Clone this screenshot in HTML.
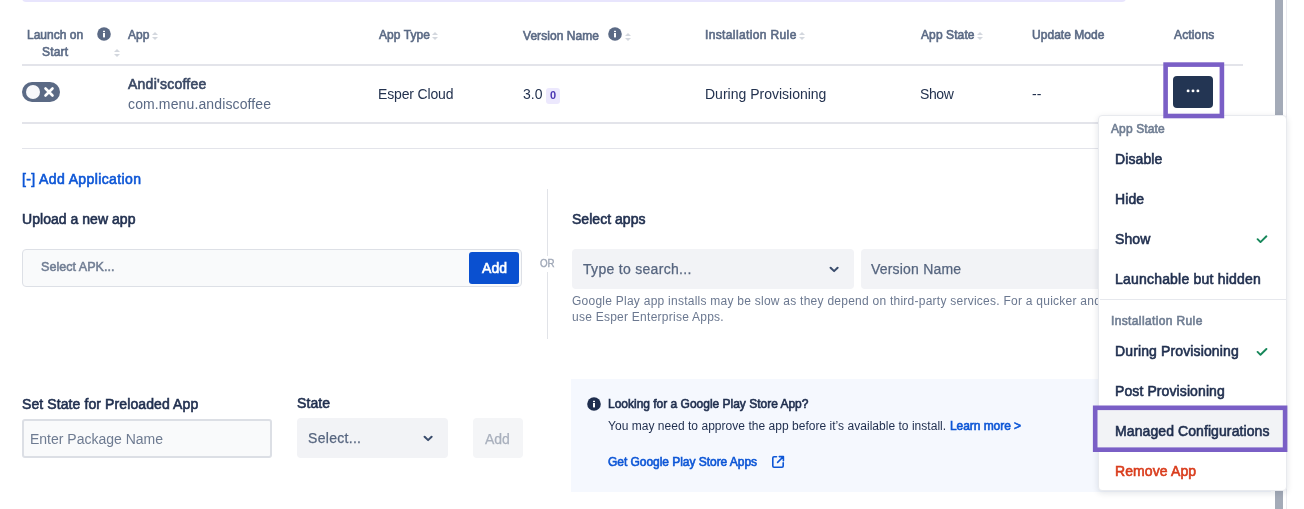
<!DOCTYPE html>
<html><head><meta charset="utf-8">
<style>
html,body{margin:0;padding:0;width:1304px;height:509px;overflow:hidden;background:#fff;position:relative;font-family:"Liberation Sans",sans-serif;}
.a{position:absolute;}
.t{position:absolute;white-space:nowrap;}
.sb{-webkit-text-stroke:0.6px currentColor;}
.s12{-webkit-text-stroke:0.6px currentColor;}
.sort{position:absolute;width:6px;height:8px;}
.sort:before,.sort:after{content:"";position:absolute;left:0;border-left:3px solid transparent;border-right:3px solid transparent;}
.sort:before{top:0;border-bottom:3px solid #d3d7de;}
.sort:after{top:5px;border-top:3px solid #d3d7de;}
</style></head><body><div class="a" style="left:0;top:0;width:1304px;height:509px;overflow:hidden;will-change:transform;">
<div class="a" style="left:22px;top:-6px;width:1104px;height:8px;background:#e8e5fd;border-radius:4px;"></div>
<div class="a" style="left:1275px;top:0px;width:8px;height:509px;background:#a4abb8;"></div>
<div class="a" style="left:1286px;top:0px;width:1px;height:509px;background:#ececf1;"></div>
<div class="t s12" style="left:27px;top:29px;font-size:12px;line-height:12px;color:#5b6a85;">Launch on</div>
<div class="t s12" style="left:42px;top:46px;font-size:12px;line-height:12px;color:#5b6a85;letter-spacing:0.2px;">Start</div>
<svg class="a" style="left:97px;top:27px;" width="14" height="14" viewBox="0 0 14 14"><circle cx="7" cy="7" r="6.8" fill="#5b6a85"/><rect x="6" y="3.8" width="2" height="1.3" fill="#fff"/><rect x="6" y="6" width="2" height="4.4" fill="#fff"/></svg>
<div class="sort" style="left:114px;top:49px;"></div>
<div class="t s12" style="left:128px;top:29px;font-size:12px;line-height:12px;color:#5b6a85;letter-spacing:0.05px;">App</div>
<div class="sort" style="left:152px;top:32px;"></div>
<div class="t s12" style="left:379px;top:29px;font-size:12px;line-height:12px;color:#5b6a85;letter-spacing:0.05px;">App Type</div>
<div class="sort" style="left:432px;top:32px;"></div>
<div class="t s12" style="left:523px;top:30px;font-size:12px;line-height:12px;color:#5b6a85;letter-spacing:0.05px;">Version Name</div>
<svg class="a" style="left:608px;top:27px;" width="14" height="14" viewBox="0 0 14 14"><circle cx="7" cy="7" r="6.8" fill="#5b6a85"/><rect x="6" y="3.8" width="2" height="1.3" fill="#fff"/><rect x="6" y="6" width="2" height="4.4" fill="#fff"/></svg>
<div class="sort" style="left:625px;top:33px;"></div>
<div class="t s12" style="left:705px;top:29px;font-size:12px;line-height:12px;color:#5b6a85;letter-spacing:0.37px;">Installation Rule</div>
<div class="sort" style="left:799px;top:32px;"></div>
<div class="t s12" style="left:921px;top:29px;font-size:12px;line-height:12px;color:#5b6a85;letter-spacing:0.1px;">App State</div>
<div class="sort" style="left:977px;top:32px;"></div>
<div class="t s12" style="left:1032px;top:29px;font-size:12px;line-height:12px;color:#5b6a85;letter-spacing:0.04px;">Update Mode</div>
<div class="t s12" style="left:1174px;top:29px;font-size:12px;line-height:12px;color:#5b6a85;letter-spacing:0.15px;">Actions</div>
<div class="a" style="left:22px;top:64px;width:1221px;height:2px;background:#e3e4ea;"></div>
<div class="a" style="left:22px;top:82px;width:38px;height:20px;border-radius:10px;background:#5b6a85;"></div>
<div class="a" style="left:26px;top:85px;width:14px;height:14px;border-radius:50%;background:#f7f8fb;"></div>
<svg class="a" style="left:43px;top:86px;" width="12" height="12" viewBox="0 0 12 12"><path d="M2.5 2.5 L9.5 9.5 M9.5 2.5 L2.5 9.5" stroke="#fff" stroke-width="2.6" stroke-linecap="round"/></svg>
<div class="t sb" style="left:128px;top:77px;font-size:14px;line-height:14px;color:#3a4864;letter-spacing:0.25px;">Andi'scoffee</div>
<div class="t" style="left:128px;top:97px;font-size:14px;line-height:14px;color:#5b6a85;letter-spacing:0.13px;">com.menu.andiscoffee</div>
<div class="t" style="left:378px;top:87px;font-size:14px;line-height:14px;color:#23324f;letter-spacing:-0.15px;">Esper Cloud</div>
<div class="t" style="left:523px;top:87px;font-size:14px;line-height:14px;color:#23324f;">3.0</div>
<div class="a" style="left:546px;top:88px;width:14px;height:16px;border-radius:3px;background:#ece8fd;"></div>
<div class="t" style="left:550px;top:90px;font-size:11px;line-height:11px;color:#4b36b3;font-weight:700;">0</div>
<div class="t" style="left:705px;top:87px;font-size:14px;line-height:14px;color:#23324f;">During Provisioning</div>
<div class="t" style="left:920px;top:87px;font-size:14px;line-height:14px;color:#23324f;letter-spacing:-0.4px;">Show</div>
<div class="t" style="left:1032px;top:87px;font-size:14px;line-height:14px;color:#23324f;">--</div>
<div class="a" style="left:1173px;top:76px;width:40px;height:32px;border-radius:4px;background:#233553;"></div>
<div class="a" style="left:22px;top:122px;width:1221px;height:2px;background:#e3e4ea;"></div>
<div class="a" style="left:22px;top:148px;width:1264px;height:1px;background:#e3e4ea;"></div>
<div class="t sb" style="left:22px;top:172px;font-size:14px;line-height:14px;color:#0d56d6;letter-spacing:0.38px;">[-] Add Application</div>
<div class="t sb" style="left:22px;top:212px;font-size:14px;line-height:14px;color:#1f2e4e;letter-spacing:0.04px;">Upload a new app</div>
<div class="a" style="left:22px;top:249px;width:500px;height:38px;box-sizing:border-box;border:1px solid #dde0e6;border-radius:4px;background:#f9fafb;"></div>
<div class="t" style="left:41px;top:261px;font-size:12.6px;line-height:12.6px;color:#707d93;-webkit-text-stroke:0.5px #707d93;">Select APK...</div>
<div class="a" style="left:469px;top:252px;width:50px;height:32px;border-radius:3px;background:#0a50d0;"></div>
<div class="t sb" style="left:482px;top:261px;font-size:14px;line-height:14px;color:#fff;letter-spacing:0.06px;">Add</div>
<div class="a" style="left:547px;top:189px;width:1px;height:67px;background:#e1e3e8;"></div>
<div class="a" style="left:547px;top:272px;width:1px;height:67px;background:#e1e3e8;"></div>
<div class="t" style="left:540px;top:258px;font-size:11px;line-height:11px;color:#a1a9b8;-webkit-text-stroke:0.4px #a1a9b8;transform:scaleX(0.89);transform-origin:0 0;">OR</div>
<div class="t sb" style="left:572px;top:212px;font-size:14px;line-height:14px;color:#1f2e4e;letter-spacing:0.03px;">Select apps</div>
<div class="a" style="left:572px;top:249px;width:282px;height:40px;border-radius:4px;background:#f2f3f6;"></div>
<div class="t" style="left:583px;top:262px;font-size:14px;line-height:14px;color:#56657f;letter-spacing:0.3px;-webkit-text-stroke:0.25px #56657f;">Type to search...</div>
<div class="a" style="left:861px;top:249px;width:300px;height:40px;border-radius:4px;background:#f2f3f6;"></div>
<div class="t" style="left:871px;top:262px;font-size:14px;line-height:14px;color:#56657f;letter-spacing:0.2px;-webkit-text-stroke:0.25px #56657f;">Version Name</div>
<div class="t" style="left:572px;top:295px;font-size:12px;line-height:12px;color:#6b7890;letter-spacing:0.25px;">Google Play app installs may be slow as they depend on third-party services. For a quicker and more reliable experience,</div>
<div class="t" style="left:572px;top:311px;font-size:12px;line-height:12px;color:#6b7890;letter-spacing:0.25px;">use Esper Enterprise Apps.</div>
<div class="t sb" style="left:22px;top:397px;font-size:14px;line-height:14px;color:#1f2e4e;letter-spacing:0.1px;">Set State for Preloaded App</div>
<div class="a" style="left:22px;top:419px;width:250px;height:39px;box-sizing:border-box;border:2px solid #dcdfe5;border-radius:3px;background:#f9fafb;"></div>
<div class="t" style="left:30px;top:432px;font-size:14px;line-height:14px;color:#6e7b91;">Enter Package Name</div>
<div class="t sb" style="left:297px;top:396px;font-size:14px;line-height:14px;color:#1f2e4e;letter-spacing:0.1px;">State</div>
<div class="a" style="left:297px;top:418px;width:151px;height:40px;border-radius:4px;background:#f2f3f6;"></div>
<div class="t" style="left:308px;top:431px;font-size:14px;line-height:14px;color:#56657f;letter-spacing:0.3px;-webkit-text-stroke:0.25px #56657f;">Select...</div>
<div class="a" style="left:473px;top:418px;width:50px;height:40px;border-radius:4px;background:#f4f5f7;"></div>
<div class="t" style="left:485px;top:432px;font-size:14px;line-height:14px;color:#a9b0bd;-webkit-text-stroke:0.25px #a9b0bd;">Add</div>
<div class="a" style="left:571px;top:379px;width:700px;height:113px;background:#f5f8fe;"></div>
<svg class="a" style="left:587px;top:397px;" width="14" height="14" viewBox="0 0 14 14"><circle cx="7" cy="7" r="6.8" fill="#1f2e4e"/><rect x="6" y="3.8" width="2" height="1.3" fill="#fff"/><rect x="6" y="6" width="2" height="4.4" fill="#fff"/></svg>
<div class="t s12" style="left:608px;top:398px;font-size:12px;line-height:12px;color:#1f2e4e;letter-spacing:-0.01px;">Looking for a Google Play Store App?</div>
<div class="t" style="left:608px;top:420px;font-size:12px;line-height:12px;color:#1f2e4e;letter-spacing:0.03px;">You may need to approve the app before it&rsquo;s available to install.</div>
<div class="t s12" style="left:950px;top:420px;font-size:12px;line-height:12px;color:#0d56d6;letter-spacing:-0.06px;">Learn more &gt;</div>
<div class="t s12" style="left:608px;top:456px;font-size:12px;line-height:12px;color:#0d56d6;letter-spacing:-0.04px;">Get Google Play Store Apps</div>
<svg class="a" style="left:771px;top:455px;" width="14" height="14" viewBox="0 0 14 14"><path d="M5.5 1.8 H3 Q1.8 1.8 1.8 3 V11 Q1.8 12.2 3 12.2 H11 Q12.2 12.2 12.2 11 V7.8 M8.3 1.6 H12.4 V5.7 M12.2 1.8 L6.6 7.4" fill="none" stroke="#0d56d6" stroke-width="1.6" stroke-linecap="round" stroke-linejoin="round"/></svg>
<div class="a" style="left:1098px;top:115px;width:189px;height:376px;box-sizing:border-box;background:#fff;border:1px solid #e8eaee;border-radius:4px;box-shadow:0 2px 6px rgba(20,30,60,0.12);"></div>
<div class="t s12" style="left:1111px;top:123px;font-size:12px;line-height:12px;color:#6f7d92;letter-spacing:0.11px;">App State</div>
<div class="t sb" style="left:1115px;top:152px;font-size:14px;line-height:14px;color:#1f2e4e;letter-spacing:0.1px;">Disable</div>
<div class="t sb" style="left:1115px;top:192px;font-size:14px;line-height:14px;color:#1f2e4e;letter-spacing:0.1px;">Hide</div>
<div class="t sb" style="left:1115px;top:232px;font-size:14px;line-height:14px;color:#1f2e4e;letter-spacing:0.1px;">Show</div>
<div class="t sb" style="left:1115px;top:272px;font-size:14px;line-height:14px;color:#1f2e4e;letter-spacing:0.2px;">Launchable but hidden</div>
<div class="a" style="left:1100px;top:299px;width:186px;height:1px;background:#e6e8ed;"></div>
<div class="t s12" style="left:1111px;top:315px;font-size:12px;line-height:12px;color:#6f7d92;letter-spacing:0.37px;">Installation Rule</div>
<div class="t sb" style="left:1115px;top:344px;font-size:14px;line-height:14px;color:#1f2e4e;letter-spacing:0.13px;">During Provisioning</div>
<div class="t sb" style="left:1115px;top:384px;font-size:14px;line-height:14px;color:#1f2e4e;letter-spacing:0.1px;">Post Provisioning</div>
<div class="a" style="left:1097px;top:410px;width:186px;height:38px;background:#f2f3f6;"></div>
<div class="t sb" style="left:1115px;top:424px;font-size:14px;line-height:14px;color:#1f2e4e;letter-spacing:0.09px;">Managed Configurations</div>
<div class="t sb" style="left:1115px;top:464px;font-size:14px;line-height:14px;color:#d93c1c;letter-spacing:0.1px;">Remove App</div>
<svg class="a" style="left:0;top:0;" width="1304" height="509"><circle cx="1188.1" cy="90.9" r="1.45" fill="#fff"/><circle cx="1193" cy="90.9" r="1.45" fill="#fff"/><circle cx="1197.9" cy="90.9" r="1.45" fill="#fff"/><path d="M830.6 267.7 L834.1 271.1 L837.6 267.7 M424.6 436.7 L428.1 440.1 L431.6 436.7" fill="none" stroke="#3a4c6c" stroke-width="2" stroke-linecap="round" stroke-linejoin="round"/><path d="M1257.6 239.2 L1260.5 242.1 L1266.4 236.3 M1257.6 351.9 L1260.5 354.8 L1266.4 349" fill="none" stroke="#17875a" stroke-width="1.9" stroke-linecap="round" stroke-linejoin="round"/><rect x="1165.6" y="64.6" width="56.3" height="51.4" fill="none" stroke="#7a5fc6" stroke-width="4.6"/><rect x="1095.2" y="407.8" width="189.9" height="41.9" fill="none" stroke="#7a5fc6" stroke-width="4.6"/></svg>
</div></body></html>
